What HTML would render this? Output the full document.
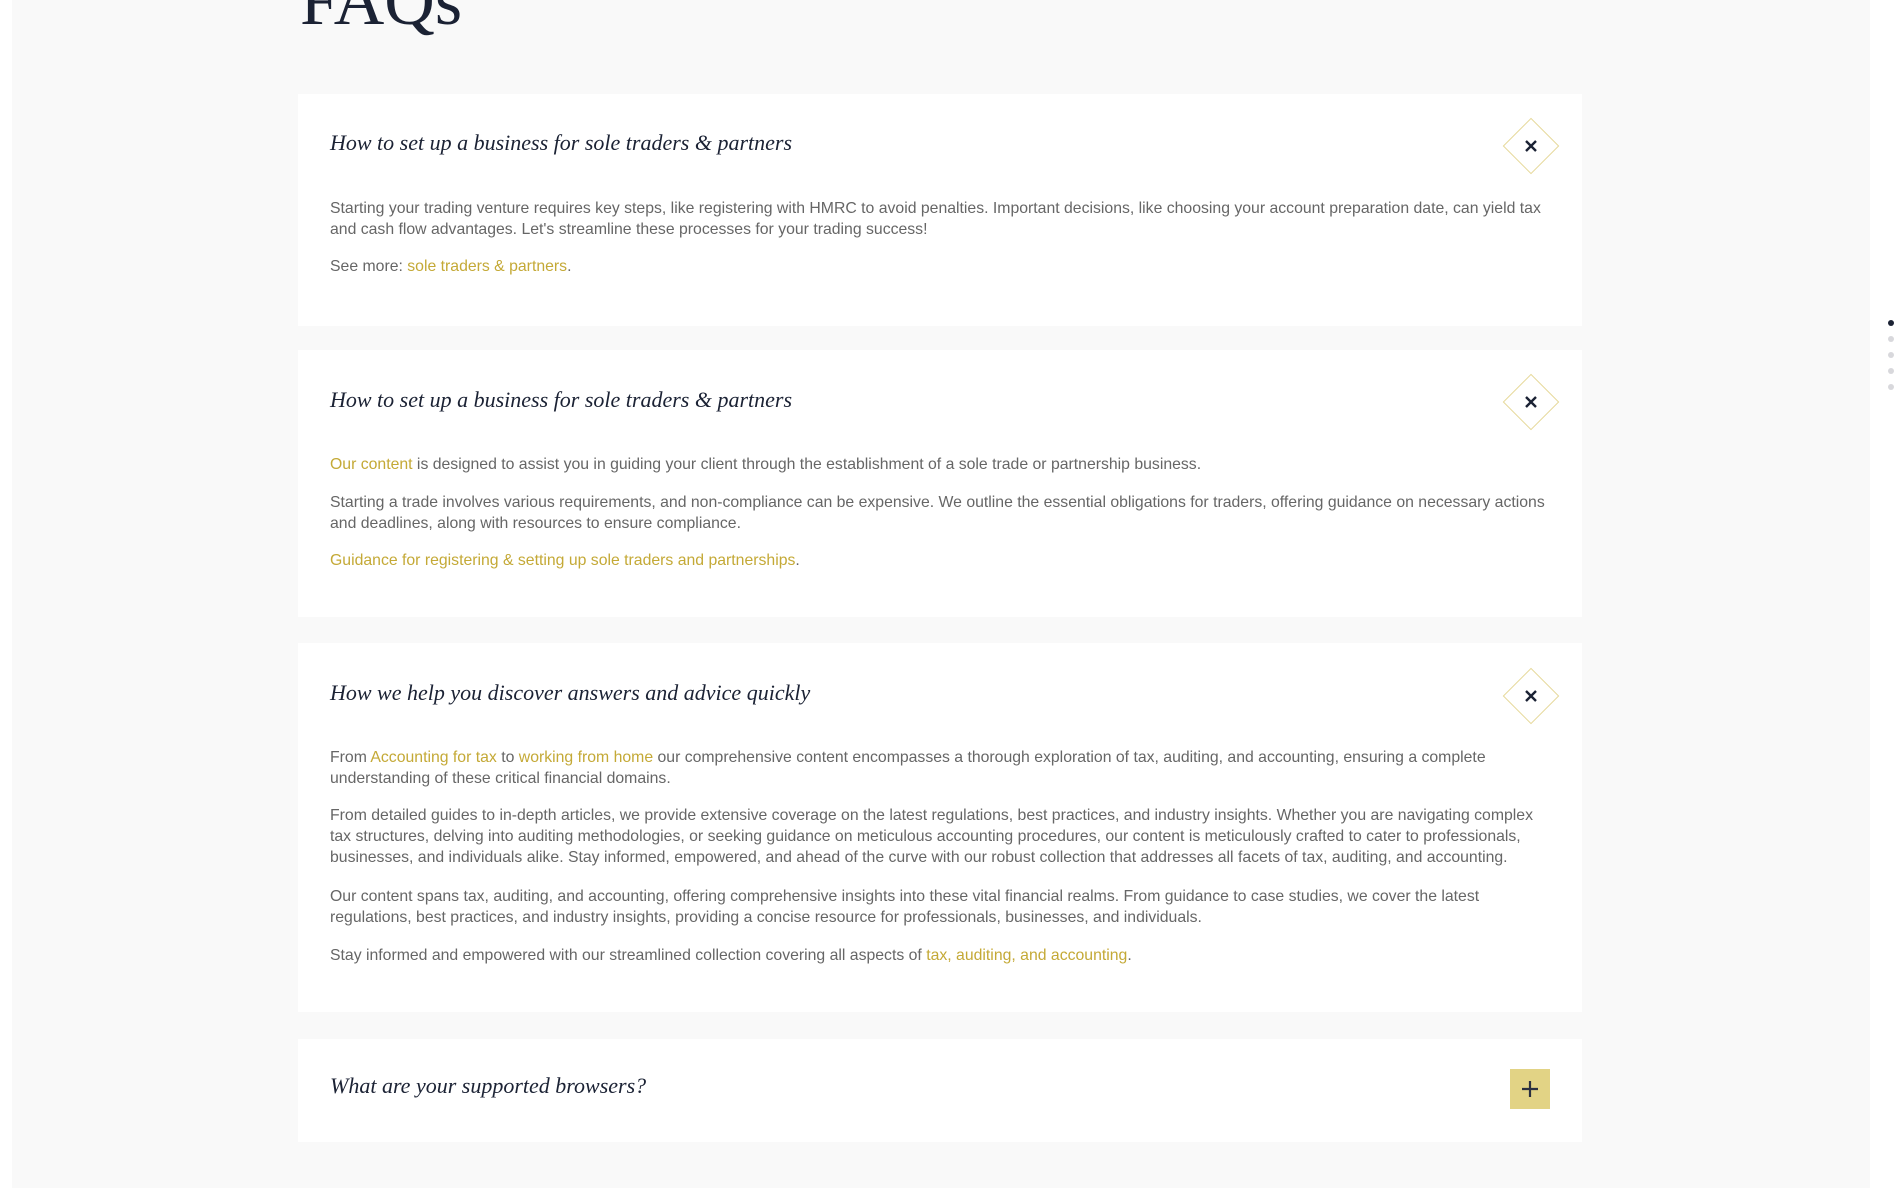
<!DOCTYPE html>
<html><head><meta charset="utf-8"><style>
*{margin:0;padding:0;box-sizing:border-box}
html,body{width:1903px;height:1188px;overflow:hidden;background:#fff}
body{position:relative;font-family:"Liberation Sans",sans-serif}
.bg{position:absolute;left:12px;top:0;width:1858px;height:1188px;background:#f9f9f9}
h1{position:absolute;left:300px;top:-38px;font:400 70px "Liberation Serif",serif;color:#1b2234}
.card{position:absolute;left:298px;width:1284px;background:#fff}
.t{position:absolute;left:32px;font:italic 22px "Liberation Serif",serif;color:#1b2234;line-height:26px;white-space:nowrap}
.p{position:absolute;left:32px;width:1218px;font-size:15.8px;line-height:21px;color:#666}
a{color:#c4a936;text-decoration:none}
.dia{position:absolute;left:1213px;width:40px;height:40px;transform:rotate(45deg);border:1.5px solid #e6d899}
.x{position:absolute;left:1221px;width:24px;height:24px}
.plus{position:absolute;left:1212px;width:40px;height:40px;background:#e2d385}
.dot{position:absolute;left:1888px;width:6px;height:6px;border-radius:50%;background:#d8d8dc}
</style></head><body>
<div class="bg"></div>
<h1>FAQs</h1>

<div class="card" style="top:94px;height:232px">
<div class="t" style="top:36px">How to set up a business for sole traders &amp; partners</div>
<div class="dia" style="top:32px"></div>
<svg class="x" style="top:40px" viewBox="0 0 24 24"><path d="M7 7L17 17M17 7L7 17" stroke="#1b2234" stroke-width="2.4"/></svg>
<div class="p" style="top:104px">Starting your trading venture requires key steps, like registering with HMRC to avoid penalties. Important decisions, like choosing your account preparation date, can yield tax and cash flow advantages. Let's streamline these processes for your trading success!</div>
<div class="p" style="top:162px">See more: <a>sole traders &amp; partners</a>.</div>
</div>

<div class="card" style="top:350px;height:267px">
<div class="t" style="top:37px">How to set up a business for sole traders &amp; partners</div>
<div class="dia" style="top:32px"></div>
<svg class="x" style="top:40px" viewBox="0 0 24 24"><path d="M7 7L17 17M17 7L7 17" stroke="#1b2234" stroke-width="2.4"/></svg>
<div class="p" style="top:104px"><a>Our content</a> is designed to assist you in guiding your client through the establishment of a sole trade or partnership business.</div>
<div class="p" style="top:142px">Starting a trade involves various requirements, and non-compliance can be expensive. We outline the essential obligations for traders, offering guidance on necessary actions and deadlines, along with resources to ensure compliance.</div>
<div class="p" style="top:200px"><a>Guidance for registering &amp; setting up sole traders and partnerships</a>.</div>
</div>

<div class="card" style="top:643px;height:369px">
<div class="t" style="top:37px">How we help you discover answers and advice quickly</div>
<div class="dia" style="top:33px"></div>
<svg class="x" style="top:41px" viewBox="0 0 24 24"><path d="M7 7L17 17M17 7L7 17" stroke="#1b2234" stroke-width="2.4"/></svg>
<div class="p" style="top:104px">From <a>Accounting for tax</a> to <a>working from home</a> our comprehensive content encompasses a thorough exploration of tax, auditing, and accounting, ensuring a complete understanding of these critical financial domains.</div>
<div class="p" style="top:162px">From detailed guides to in-depth articles, we provide extensive coverage on the latest regulations, best practices, and industry insights. Whether you are navigating complex tax structures, delving into auditing methodologies, or seeking guidance on meticulous accounting procedures, our content is meticulously crafted to cater to professionals, businesses, and individuals alike. Stay informed, empowered, and ahead of the curve with our robust collection that addresses all facets of tax, auditing, and accounting.</div>
<div class="p" style="top:243px">Our content spans tax, auditing, and accounting, offering comprehensive insights into these vital financial realms. From guidance to case studies, we cover the latest regulations, best practices, and industry insights, providing a concise resource for professionals, businesses, and individuals.</div>
<div class="p" style="top:302px">Stay informed and empowered with our streamlined collection covering all aspects of <a>tax, auditing, and accounting</a>.</div>
</div>

<div class="card" style="top:1039px;height:103px">
<div class="t" style="top:34px">What are your supported browsers?</div>
<div class="plus" style="top:30px"><svg width="40" height="40" viewBox="0 0 40 40"><path d="M20 12V28M12 20H28" stroke="#2a3040" stroke-width="2.2"/></svg></div>
</div>

<div class="dot" style="top:320px;background:#1b2234"></div>
<div class="dot" style="top:336px"></div>
<div class="dot" style="top:352px"></div>
<div class="dot" style="top:368px"></div>
<div class="dot" style="top:384px"></div>
</body></html>
